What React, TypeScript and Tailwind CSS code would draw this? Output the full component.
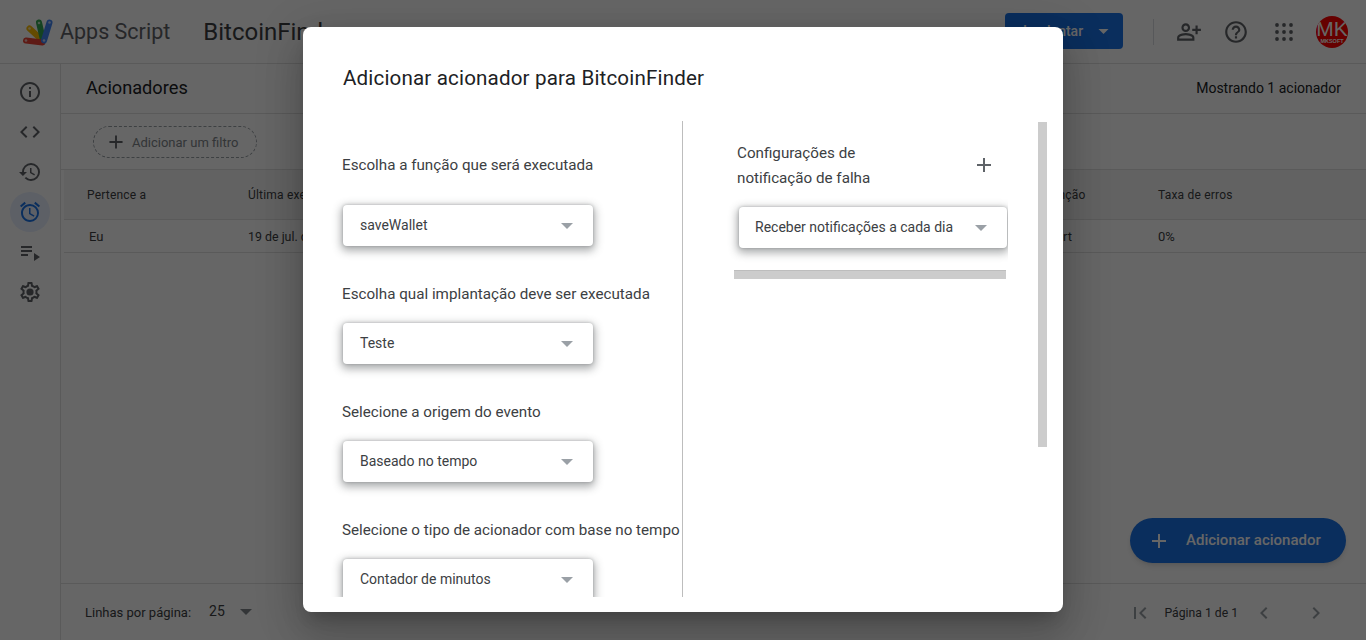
import { MdInfoOutline, MdCode, MdHistory, MdAccessAlarm, MdPlaylistPlay, MdOutlinePersonAddAlt, MdHelpOutline, MdAdd, MdFirstPage, MdChevronLeft, MdChevronRight } from "react-icons/md";

const Arrow = ({ className }: { className: string }) => (
  <svg viewBox="0 0 12 6" className={className}><path d="M0 0h12L6 6z" fill="currentColor" /></svg>
);

const Gear = () => (
  <svg viewBox="0 0 24 24" className="w-6 h-6 text-[#5f6368]" fill="none">
    <path fill="currentColor" d="M19.43 12.98c.04-.32.07-.64.07-.98s-.03-.66-.07-.98l2.11-1.65c.19-.15.24-.42.12-.64l-2-3.46c-.12-.22-.39-.3-.61-.22l-2.49 1c-.52-.4-1.08-.73-1.69-.98l-.38-2.65A.488.488 0 0 0 14 2h-4c-.25 0-.46.18-.49.42l-.38 2.65c-.61.25-1.17.59-1.69.98l-2.49-1c-.23-.09-.49 0-.61.22l-2 3.46c-.13.22-.07.49.12.64l2.11 1.65c-.04.32-.07.65-.07.98s.03.66.07.98l-2.11 1.65c-.19.15-.24.42-.12.64l2 3.46c.12.22.39.3.61.22l2.49-1c.52.4 1.08.73 1.69.98l.38 2.65c.03.24.24.42.49.42h4c.25 0 .46-.18.49-.42l.38-2.65c.61-.25 1.17-.59 1.69-.98l2.49 1c.23.09.49 0 .61-.22l2-3.46c.12-.22.07-.49-.12-.64l-2.11-1.65zM17.45 11.27c.04.31.05.52.05.73s-.02.43-.05.73l-.14 1.13.89.7 1.08.84-.7 1.21-1.27-.51-1.04-.42-.9.68c-.43.32-.84.56-1.25.73l-1.06.43-.16 1.13-.2 1.35h-1.4l-.19-1.35-.16-1.13-1.06-.43c-.43-.18-.83-.41-1.23-.71l-.91-.7-1.06.43-1.27.51-.7-1.21 1.08-.84.89-.7-.14-1.13c-.03-.31-.05-.54-.05-.74s.02-.43.05-.73l.14-1.13-.89-.7-1.08-.84.7-1.21 1.27.51 1.04.42.9-.68c.43-.32.84-.56 1.25-.73l1.06-.43.16-1.13.2-1.35h1.39l.19 1.35.16 1.13 1.06.43c.43.18.83.41 1.23.71l.91.7 1.06-.43 1.27-.51.7 1.21-1.07.85-.89.7.14 1.13z" />
    <circle cx="12" cy="12" r="3.6" fill="currentColor" />
  </svg>
);

const Logo = () => (
  <svg viewBox="0 0 32 28" className="h-7 w-8" fill="none" strokeLinecap="round" strokeWidth="6">
    <path d="M7.5 10.5 20 22" stroke="#fbbc04" />
    <path d="M17 4.5 21 22" stroke="#34a853" />
    <path d="M4 22.5 20.5 24.5" stroke="#ea4335" />
    <path d="M27.5 4.5 22 22.5" stroke="#4285f4" />
    <g fill="#fff" stroke="none" opacity=".65">
      <circle cx="27.5" cy="4.5" r="1.3" /><circle cx="17" cy="5" r="1.3" /><circle cx="7.5" cy="10.5" r="1.3" /><circle cx="4" cy="22.5" r="1.3" /><circle cx="22" cy="22.5" r="1.3" />
    </g>
  </svg>
);

const Dots = () => (
  <svg viewBox="0 0 18 18" className="h-[18px] w-[18px] text-[#5f6368]" fill="currentColor">
    {[2, 9, 16].flatMap((y) => [2, 9, 16].map((x) => <circle key={`${x}-${y}`} cx={x} cy={y} r="1.9" />))}
  </svg>
);

const Select = ({ text, w, gap, inner = "pb-[2px]" }: { text: string; w: string; gap: string; inner?: string }) => (
  <div className={`flex h-[41px] items-center justify-between rounded bg-white pl-[17px] text-[14px] text-[#3c4043] shadow-[0_3px_8px_2px_rgba(60,64,67,.42),0_0_3px_rgba(60,64,67,.3)] ${w} ${gap}`}>
    <span className={inner}>{text}</span>
    <Arrow className="h-[6px] w-3 text-[#9aa0a6]" />
  </div>
);

const sideItem = "flex h-10 w-10 items-center justify-center rounded-full";

export default function App() {
  return (
    <div className="relative flex h-screen flex-col overflow-hidden bg-white font-['Roboto',sans-serif] text-[#3c4043]">
      <header className="flex h-16 shrink-0 items-center border-b border-[#e0e0e0] pl-[22px] pr-[18px]">
        <Logo />
        <span className="ml-[6px] pt-[2px] text-[21.5px] text-[#5f6368]">Apps Script</span>
        <span className="ml-[33px] text-[24px] text-[#3c4043]">BitcoinFinder</span>
        <div className="mb-px ml-auto flex h-9 w-[118px] items-center justify-between rounded bg-[#1a73e8] pl-[18px] pr-[14px] text-[14px] font-medium text-white">
          <span>Implantar</span>
          <Arrow className="h-[5px] w-[11px]" />
        </div>
        <div className="ml-[30px] h-[26px] w-px bg-[#dadce0]" />
        <div className="ml-[22px] flex items-center text-[#5f6368]">
          <MdOutlinePersonAddAlt className="h-[26px] w-[26px]" />
          <MdHelpOutline className="ml-[21px] h-[26px] w-[26px]" />
          <div className="ml-[26px]"><Dots /></div>
          <div className="ml-[23px] flex h-8 w-8 flex-col items-center justify-center overflow-hidden rounded-full bg-[#ff0000] font-['Liberation_Sans',sans-serif] leading-none text-white">
            <span className="text-[21px] leading-[18px]">MK</span>
            <span className="text-[5.5px] font-bold leading-[6px]">MKSOFT</span>
          </div>
        </div>
      </header>

      <div className="flex min-h-0 flex-1">
        <nav className="flex w-[61px] shrink-0 flex-col items-center border-r border-[#e0e0e0] pt-2 text-[#5f6368]">
          <div className={sideItem}><MdInfoOutline className="h-6 w-6" /></div>
          <div className={sideItem}><MdCode className="h-6 w-6" /></div>
          <div className={sideItem}><MdHistory className="h-6 w-6" /></div>
          <div className={`${sideItem} bg-[#e8f0fe] text-[#1a73e8]`}><MdAccessAlarm className="h-6 w-6" /></div>
          <div className={sideItem}><MdPlaylistPlay className="h-6 w-6" /></div>
          <div className={sideItem}><Gear /></div>
        </nav>

        <main className="flex min-w-0 flex-1 flex-col">
          <div className="flex h-[50px] shrink-0 items-center justify-between border-b border-[#e0e0e0] px-[25px]">
            <span className="pb-[2px] text-[18.2px] text-[#202124]">Acionadores</span>
            <span className="text-[14px] text-[#202124]">Mostrando 1 acionador</span>
          </div>
          <div className="flex h-[56px] shrink-0 items-center border-b border-[#e0e0e0] pl-8">
            <div className="flex h-8 w-[164px] items-center gap-[7px] rounded-full border border-dashed border-[#9aa0a6] pl-[13px] text-[13px] text-[#80868b]">
              <MdAdd className="h-[18px] w-[18px] scale-125 text-[#5f6368]" />
              <span className="pt-[2px]">Adicionar um filtro</span>
            </div>
          </div>
          <div className="ml-[3px] flex h-[50px] shrink-0 items-center border-b border-[#e0e0e0] bg-[#f5f5f5] pl-[23px] text-[12px] tracking-[.2px] text-[#3c4043]">
            <span className="w-[161px]">Pertence a</span>
            <span className="w-[797px]">Última execução</span>
            <span className="w-[113px]">Função</span>
            <span>Taxa de erros</span>
          </div>
          <div className="ml-[3px] flex h-[33px] shrink-0 items-center border-b border-[#e0e0e0] pl-[25px] pt-[2px] text-[13px] text-[#3c4043]">
            <span className="w-[159px]">Eu</span>
            <span className="w-[797px] text-[12.4px]">19 de jul. de 2022</span>
            <span className="w-[113px]">start</span>
            <span>0%</span>
          </div>
          <div className="relative flex-1">
            <div className="absolute bottom-5 right-5 flex h-[45px] w-[216px] items-center rounded-full bg-[#1a73e8] pl-[17px] text-[15px] font-medium text-white shadow-md">
              <MdAdd className="h-[24px] w-[24px]" />
              <span className="ml-[15px]">Adicionar acionador</span>
            </div>
          </div>
          <footer className="flex h-[57px] shrink-0 items-center border-t border-[#e0e0e0] pl-6 pt-[2px] text-[13px] text-[#3c4043]">
            <span>Linhas por página:</span>
            <span className="ml-[18px] -translate-y-[2px] text-[14px]">25</span>
            <Arrow className="ml-[15px] h-[6px] w-3 -translate-y-[1px] text-[#80868b]" />
            <div className="ml-auto flex items-center text-[#9aa0a6]">
              <MdFirstPage className="h-6 w-6" />
              <span className="ml-3 text-[12.2px] text-[#3c4043]">Página 1 de 1</span>
              <MdChevronLeft className="ml-[14px] h-6 w-6" />
              <MdChevronRight className="ml-7 mr-[38px] h-6 w-6" />
            </div>
          </footer>
        </main>
      </div>

      <div className="absolute inset-0 bg-black/60" />

      <div className="absolute left-[303px] top-[27px] flex h-[585px] w-[760px] flex-col rounded-lg bg-white pb-[15px] shadow-[0_11px_15px_-7px_rgba(0,0,0,.2),0_24px_38px_3px_rgba(0,0,0,.14),0_9px_46px_8px_rgba(0,0,0,.12)]">
        <h2 className="flex h-[94px] shrink-0 items-center pl-10 pt-2 text-[20.6px] font-normal leading-none tracking-[.15px] text-[#202124]">Adicionar acionador para BitcoinFinder</h2>
        <div className="flex min-h-0 flex-1 overflow-hidden">
          <div className="w-[380px] shrink-0 border-r border-[#bdbdbd] pl-10 text-[15.2px] leading-6 text-[#3c4043]">
            <p className="-ml-px mt-8 whitespace-nowrap">Escolha a função que será executada</p>
            <Select text="saveWallet" w="w-[250px] pr-5" gap="mt-7" />
            <p className="-ml-px mt-9 whitespace-nowrap">Escolha qual implantação deve ser executada</p>
            <Select text="Teste" w="w-[250px] pr-5" gap="mt-[17px]" />
            <p className="-ml-px mt-9 whitespace-nowrap">Selecione a origem do evento</p>
            <Select text="Baseado no tempo" w="w-[250px] pr-5" gap="mt-[17px]" />
            <p className="-ml-px mt-9 whitespace-nowrap">Selecione o tipo de acionador com base no tempo</p>
            <Select text="Contador de minutos" w="w-[250px] pr-5" gap="mt-[17px]" />
          </div>
          <div className="flex w-[325px] shrink-0 flex-col overflow-hidden pl-[51px] text-[15.2px] leading-[25px] text-[#3c4043]">
            <div className="mt-[19px] flex h-[50px] items-center justify-between pl-[3px] pr-3">
              <p className="pt-[2px]">Configurações de<br />notificação de falha</p>
              <MdAdd className="h-6 w-6 text-[#5f6368]" />
            </div>
            <Select text="Receber notificações a cada dia" w="ml-[5px] w-[268px] pr-5" gap="mt-[17px]" inner="-ml-px" />
            <div className="mt-[22px] h-[9px] w-[272px] border-t border-[#bdbdbd] bg-[#cccccc]" />
          </div>
          <div className="ml-[30px] mt-px h-[325px] w-[9px] bg-[#cccccc]" />
        </div>
      </div>
    </div>
  );
}
